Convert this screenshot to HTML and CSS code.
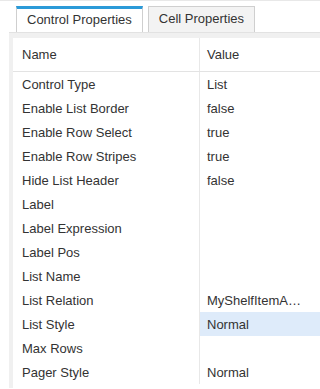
FILE: index.html
```html
<!DOCTYPE html>
<html lang="en">
<head>
  <meta charset="UTF-8">
  <title>Properties</title>
  <link rel="stylesheet" href="styles.css">
</head>
<body>

  <div class="tabs">
    <div class="tab active">Control Properties</div>
    <div class="tab">Cell Properties</div>
  </div>

  <div class="panel">
    <div class="sheet">
      <table class="props">
        <thead>
          <tr>
            <th class="name">Name</th>
            <th class="value">Value</th>
          </tr>
        </thead>
        <tbody>
          <tr><td class="name">Control Type</td><td class="value">List</td></tr>
          <tr><td class="name">Enable List Border</td><td class="value">false</td></tr>
          <tr><td class="name">Enable Row Select</td><td class="value">true</td></tr>
          <tr><td class="name">Enable Row Stripes</td><td class="value">true</td></tr>
          <tr><td class="name">Hide List Header</td><td class="value">false</td></tr>
          <tr><td class="name">Label</td><td class="value"></td></tr>
          <tr><td class="name">Label Expression</td><td class="value"></td></tr>
          <tr><td class="name">Label Pos</td><td class="value"></td></tr>
          <tr><td class="name">List Name</td><td class="value"></td></tr>
          <tr><td class="name">List Relation</td><td class="value">MyShelfItemA…</td></tr>
          <tr><td class="name">List Style</td><td class="value selected">Normal</td></tr>
          <tr><td class="name">Max Rows</td><td class="value"></td></tr>
          <tr><td class="name">Pager Style</td><td class="value">Normal</td></tr>
        </tbody>
      </table>
    </div>
  </div>

</body>
</html>
```

FILE: styles.css
```css
body {
  margin: 0;
  font-family: "Liberation Sans", Arial, sans-serif;
  font-size: 13px;
  color: #333;
  background: white;
  border-top: 1px solid #e8e8e8;
}

.tabs {
  display: flex;
  gap: 5px;
  padding: 5px 0 0 16px;
}

.tab {
  box-sizing: border-box;
  height: 26px;
  line-height: 24px;
  padding: 0 10px;
  border: 1px solid #cfcfcf;
  border-bottom: none;
  background: #f3f3f3;
  white-space: nowrap;
}

.tab.active {
  border-top: 3px solid #2b9ad8;
  line-height: 22px;
  background: white;
}

.panel {
  box-sizing: border-box;
  margin-left: 9px;
  background: #f0f0f0;
  border-top: 1px solid #e2e2e2;
  padding: 5px 0 0 4px;
  height: 356px;
}

.sheet {
  background: white;
  height: 100%;
}

.props {
  width: 100%;
  border-collapse: collapse;
  table-layout: fixed;
}

.props th {
  font-weight: normal;
  text-align: left;
  height: 33px;
  border-bottom: 1px solid #e3e3e3;
}

.props td {
  height: 24px;
  white-space: nowrap;
  overflow: hidden;
}

.props .name {
  width: 177px;
  padding: 0 0 0 9px;
  border-right: 1px solid #e8e8e8;
}

.props .value {
  padding: 0 0 0 7px;
}

.props .selected {
  background: #deebfa;
}
```
